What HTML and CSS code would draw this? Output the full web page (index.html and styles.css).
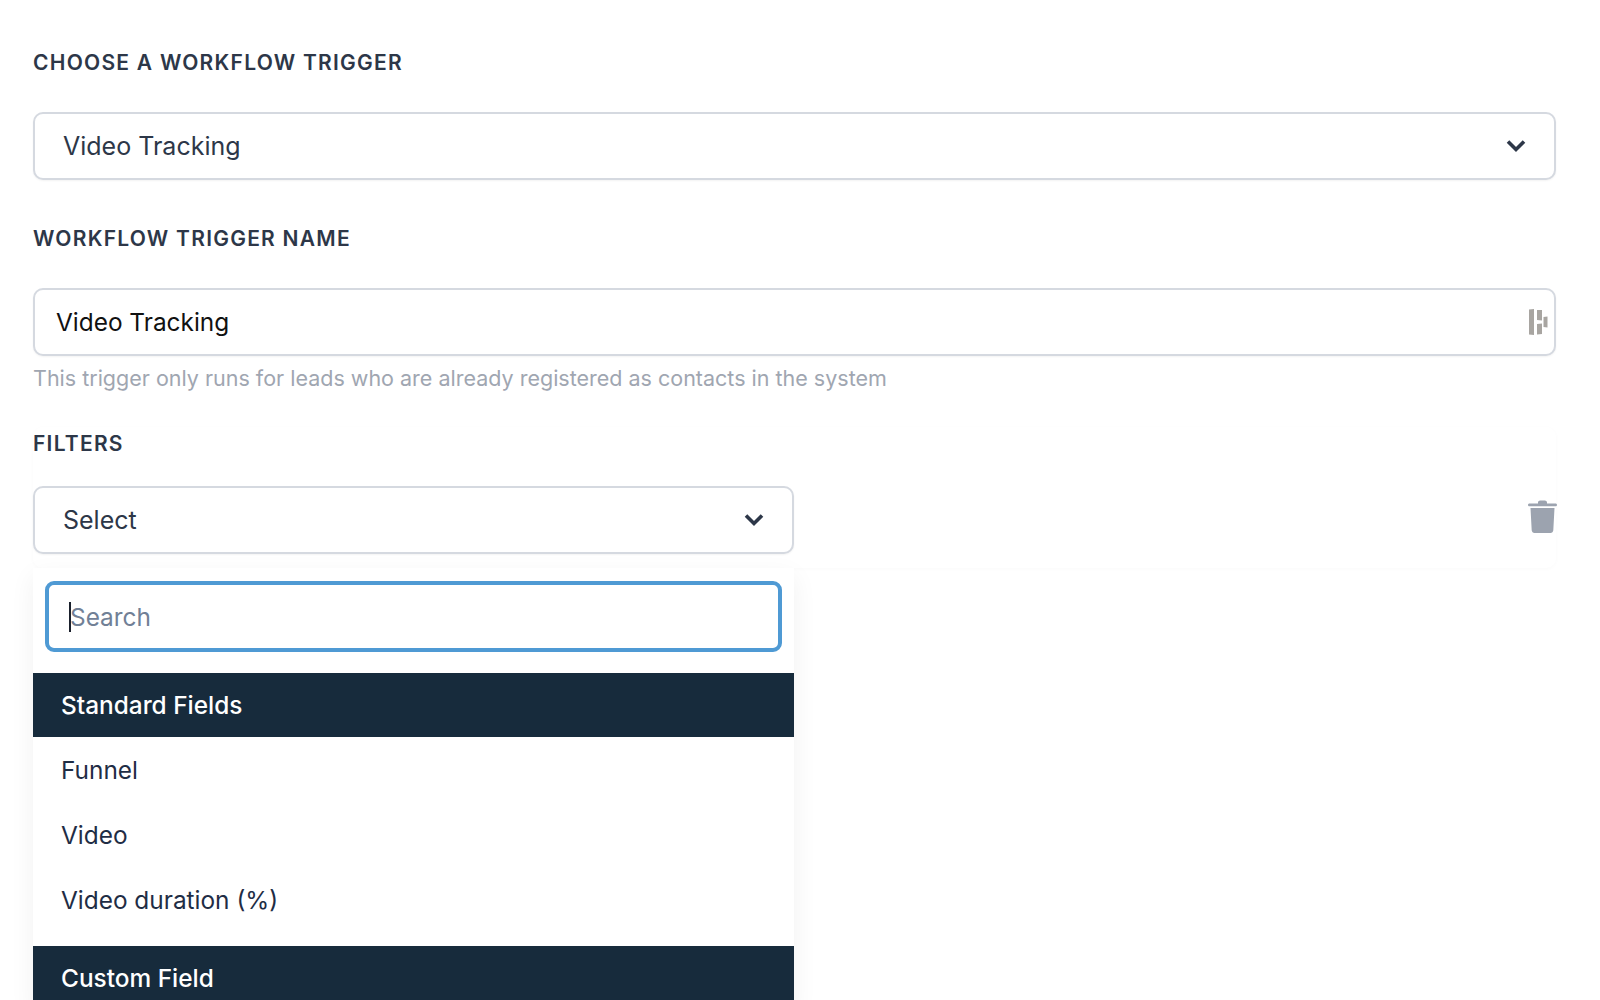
FILE: index.html
```html
<!DOCTYPE html>
<html lang="en">
<head>
<meta charset="utf-8">
<title>Workflow trigger</title>
<link rel="stylesheet" href="styles.css">
</head>
<body>
<main class="page">
  <div class="label label-first">CHOOSE A WORKFLOW TRIGGER</div>
  <div class="box select-box">
    <span>Video Tracking</span>
    <svg class="chevron" viewBox="0 0 20 14"><path d="M2 2.500 10 10.500 18 2.500" /></svg>
  </div>
  <div class="label label-second">WORKFLOW TRIGGER NAME</div>
  <div class="box input-box">
    <span>Video Tracking</span>
    <svg class="tag-icon" viewBox="0 0 20 28"><path d="M1 1.500 6 1v26l-5-.5zM9 2h5v10.500l-5-.5zM9 16l5-.5V26l-5 .5zM15.500 9l4-.5v11l-4-.5z" /></svg>
  </div>
  <p class="help">This trigger only runs for leads who are already registered as contacts in the system</p>
  <section class="filter-card">
    <div class="label label-third">FILTERS</div>
    <div class="filter-row">
      <div class="box select-box filter-select">
        <span>Select</span>
        <svg class="chevron" viewBox="0 0 20 14"><path d="M2 2.500 10 10.500 18 2.500" /></svg>
      </div>
      <svg class="trash" viewBox="0 0 29 33"><path d="M10 3.500V2.600C10 1.400 11 .5 12.200 .5h4.600C18 .5 19 1.400 19 2.600v.9h8.500c.8 0 1.500.6 1.500 1.400S28.300 6.300 27.500 6.300H1.500C.7 6.300 0 5.700 0 4.900S.7 3.500 1.500 3.500zM2.500 8h24l-1.200 22.300c-.1 1.500-1.300 2.700-2.800 2.700H6.500c-1.500 0-2.700-1.200-2.800-2.700z" /></svg>
    </div>
  </section>
  <div class="dropdown">
    <div class="search-wrap">
      <div class="search"><span class="caret"></span><span class="placeholder">Search</span></div>
    </div>
    <div class="group">Standard Fields</div>
    <div class="items">
      <div class="item">Funnel</div>
      <div class="item">Video</div>
      <div class="item">Video duration (%)</div>
    </div>
    <div class="group">Custom Field</div>
  </div>
</main>
</body>
</html>
```

FILE: styles.css
```css
* { box-sizing: border-box; }
html, body { margin: 0; height: 1000px; overflow: hidden; background: #fff; }
body { font-family: Inter, "Liberation Sans", sans-serif; color: #2d3748; }
.page { padding: 0 44px 0 33px; height: 1000px; overflow: hidden; }
.label { font-size: 21px; line-height: 28px; font-weight: 600; letter-spacing: 1.250px; color: #2d3748; }
.label-first { padding-top: 49px; height: 112px; }
.label-second { padding-top: 45px; height: 108px; }
.label-third { padding-top: 1px; height: 57px; }
.box { height: 68px; border: 2px solid #d5d9e0; border-radius: 10px; background: #fff; display: flex; align-items: center; justify-content: space-between; font-size: 25px; box-shadow: 0 1px 2px rgba(0,0,0,.05); }
.select-box { padding: 0 28px 0 28px; }
.input-box { padding: 0 6px 0 21px; color: #111; font-size: 24.400px; }
.chevron { width: 20px; height: 14px; fill: none; stroke: #2d3748; stroke-width: 3.600; }
.tag-icon { width: 20px; height: 28px; fill: #a8a5a1; }
.help { margin: 0; padding-top: 7px; height: 71px; font-size: 21.500px; line-height: 30px; color: #a0a6b1; }
.filter-card { height: 141px; padding-top: 2px; border-radius: 10px; box-shadow: 0 1px 4px rgba(0,0,0,.025); }
.filter-row { display: flex; justify-content: space-between; align-items: flex-start; }
.filter-select { width: 761px; }
.trash { width: 29px; height: 33px; margin: 14px -1px 0 0; fill: #9ca3af; }
.dropdown { width: 761px; background: #fff; box-shadow: 0 8px 24px rgba(0,0,0,.06); }
.search-wrap { padding: 13px 12px 21px; }
.search { height: 71px; border: 4px solid #4f9ad4; border-radius: 9px; display: flex; align-items: center; padding-left: 20px; font-size: 24.400px; }
.caret { width: 2px; height: 30px; background: #1a202c; margin-right: -1px; }
.placeholder { color: #718096; }
.group { height: 64px; padding-left: 28px; display: flex; align-items: center; background: #172b3c; color: #fff; font-size: 24.400px; font-weight: 500; }
.items { padding-bottom: 14px; }
.item { height: 65px; padding-left: 28px; display: flex; align-items: center; font-size: 24.400px; color: #1f2d45; }
```
